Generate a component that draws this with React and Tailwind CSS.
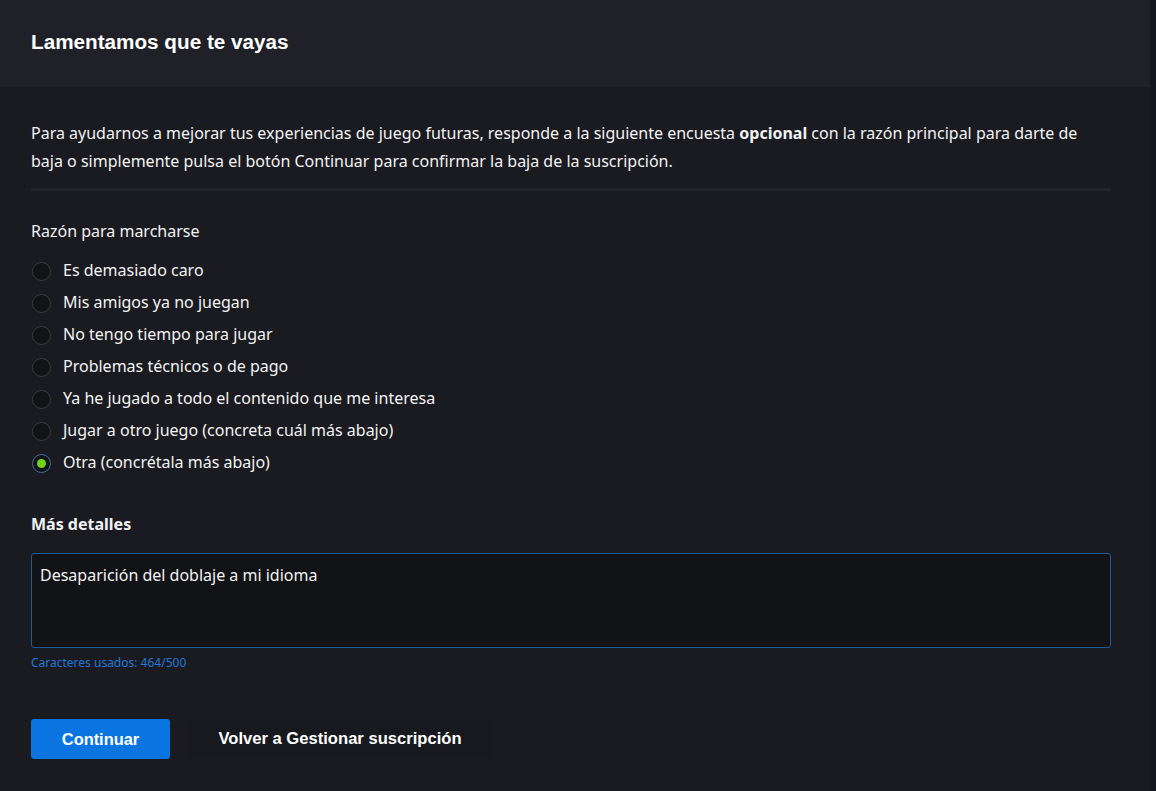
import React, { useState } from 'react';

const reasons = [
    'Es demasiado caro',
    'Mis amigos ya no juegan',
    'No tengo tiempo para jugar',
    'Problemas técnicos o de pago',
    'Ya he jugado a todo el contenido que me interesa',
    'Jugar a otro juego (concreta cuál más abajo)',
    'Otra (concrétala más abajo)',
];

const Radio = ({ checked }) => (
    <span
        className={`w-[19px] h-[19px] rounded-full flex items-center justify-center bg-[#121317] border ${
            checked ? 'border-[#3f6f9e]' : 'border-[#3a3a3d]'
        }`}
    >
        {checked && <span className="w-[9px] h-[9px] rounded-full bg-[#6fd41c]" />}
    </span>
);

export default function App() {
    const [reason, setReason] = useState(6);
    const [details, setDetails] = useState('Desaparición del doblaje a mi idioma');

    return (
        <div className="flex w-[1156px] h-[791px] bg-[#151720] overflow-hidden">
            <div className="w-[1150px] h-full flex flex-col bg-[#1a1b21] font-['Noto_Sans',sans-serif] text-[#f2f2f2]">
                {/* Header */}
                <div className="h-[87px] shrink-0 bg-[#202128] flex items-center px-[31px]">
                    <h1 className="font-['Liberation_Sans',sans-serif] font-bold text-[20.7px] text-white pb-[3px]">
                        Lamentamos que te vayas
                    </h1>
                </div>

                {/* Body */}
                <div className="pl-[31px] pr-[39px] pt-[32px]">
                    <p className="text-[16px] leading-[28px] pb-[13px] border-b-[3px] border-[#23252c]">
                        Para ayudarnos a mejorar tus experiencias de juego futuras, responde a la siguiente encuesta{' '}
                        <strong className="font-bold">opcional</strong> con la razón principal para darte de baja o
                        simplemente pulsa el botón Continuar para confirmar la baja de la suscripción.
                    </p>

                    <div className="mt-[26px] text-[16px] leading-[28px]">Razón para marcharse</div>

                    <div className="mt-[10px] flex flex-col">
                        {reasons.map((r, i) => (
                            <label
                                key={r}
                                onClick={() => setReason(i)}
                                className="h-[32px] flex items-center gap-[12px] pl-[1px] cursor-pointer"
                            >
                                <Radio checked={reason === i} />
                                <span className="text-[16px] leading-[24px] pb-[2px]">{r}</span>
                            </label>
                        ))}
                    </div>

                    <div className="mt-[31px] text-[16px] leading-[28px] font-bold">Más detalles</div>

                    <textarea
                        value={details}
                        onChange={(e) => setDetails(e.target.value)}
                        className="mt-[15px] block w-full h-[95px] resize-none bg-[#121317] border border-[#1d5b96] rounded-[3px] px-[8px] pt-[9px] text-[16px] leading-[24px] text-[#f2f2f2] outline-none"
                    />
                    <div className="mt-[7px] text-[12px] leading-[16px] text-[#1f77d6]">Caracteres usados: 464/500</div>

                    <div className="mt-[48px] flex items-center gap-[20px]">
                        <button className="w-[139px] h-[40px] rounded-[3px] bg-[#0a74e0] text-white font-['Liberation_Sans',sans-serif] font-bold text-[16.4px]">
                            Continuar
                        </button>
                        <button className="w-[300px] h-[40px] rounded-[3px] bg-[#18191e] text-white font-['Liberation_Sans',sans-serif] font-bold text-[16.6px]">
                            Volver a Gestionar suscripción
                        </button>
                    </div>
                </div>
            </div>
        </div>
    );
}
